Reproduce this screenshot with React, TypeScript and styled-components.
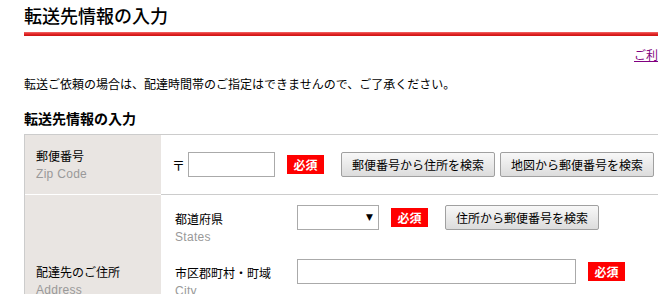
import styled, { createGlobalStyle } from 'styled-components';

const GlobalStyle = createGlobalStyle`
  html, body {
    margin: 0;
    padding: 0;
    overflow: hidden;
    background: #fff;
  }
  body {
    font-family: 'Liberation Sans', 'Noto Sans CJK JP', sans-serif;
    font-size: 12px;
    color: #000;
  }
`;

export default function App() {
  return (
    <>
      <GlobalStyle />
      <Page>
        <Title>転送先情報の入力</Title>
        <RedRule />
        <LinkRow>
          <GuideLink href='#'>ご利用ガイド</GuideLink>
        </LinkRow>
        <Notice>転送ご依頼の場合は、配達時間帯のご指定はできませんので、ご了承ください。</Notice>
        <SectionTitle>転送先情報の入力</SectionTitle>

        <FormTable>
          <Row>
            <LabelCell>
              <Jp>郵便番号</Jp>
              <En>Zip Code</En>
            </LabelCell>
            <FieldCell $padLeft={11}>
              <Controls>
                <Postal>〒</Postal>
                <TextInput $width={87} />
                <Required>必須</Required>
                <ButtonGroup>
                  <SearchButton>郵便番号から住所を検索</SearchButton>
                  <SearchButton>地図から郵便番号を検索</SearchButton>
                </ButtonGroup>
              </Controls>
            </FieldCell>
          </Row>

          <Row>
            <LabelCell>
              <Jp>配達先のご住所</Jp>
              <En>Address</En>
            </LabelCell>
            <FieldCell $padLeft={14} $stacked>
              <SubRow>
                <SubLabel>
                  <Jp>都道府県</Jp>
                  <En>States</En>
                </SubLabel>
                <Controls>
                  <SelectWrap>
                    <Select defaultValue=''>
                      <option value=''></option>
                    </Select>
                    <Arrow>▼</Arrow>
                  </SelectWrap>
                  <Required>必須</Required>
                  <SearchButton $gap={17}>住所から郵便番号を検索</SearchButton>
                </Controls>
              </SubRow>
              <SubRow>
                <SubLabel>
                  <Jp>市区郡町村・町域</Jp>
                  <En>City</En>
                </SubLabel>
                <Controls>
                  <TextInput $width={279} />
                  <Required>必須</Required>
                </Controls>
              </SubRow>
              <SubRow>
                <SubLabel>
                  <Jp>番地・建物名</Jp>
                  <En>Street</En>
                </SubLabel>
                <Controls>
                  <TextInput $width={279} />
                  <Required>必須</Required>
                </Controls>
              </SubRow>
            </FieldCell>
          </Row>
        </FormTable>
      </Page>
    </>
  );
}

const Page = styled.div`
  width: 682px;
  padding: 3px 0 0 24px;
`;

const Title = styled.h1`
  margin: 0;
  font-family: 'Noto Sans CJK JP', sans-serif;
  font-size: 18px;
  font-weight: 500;
  line-height: 24px;
  padding-bottom: 5px;
`;

const RedRule = styled.div`
  height: 4px;
  background: linear-gradient(#f26a6a, #e32424 50%, #c91414);
`;

const LinkRow = styled.div`
  margin-top: 10px;
  text-align: right;
  line-height: 18px;
`;

const GuideLink = styled.a`
  color: #800080;
  font-family: 'Noto Sans CJK JP', sans-serif;
  text-decoration: underline;
`;

const Notice = styled.p`
  margin: 10px 0 0;
  font-family: 'Noto Sans CJK JP', sans-serif;
  line-height: 18px;
`;

const SectionTitle = styled.h2`
  margin: 15px 0 0;
  font-family: 'Noto Sans CJK JP', sans-serif;
  font-size: 14px;
  font-weight: bold;
  line-height: 20px;
`;

const FormTable = styled.div`
  margin-top: 6px;
  border: 1px solid #ccc;
  border-bottom: none;
`;

const Row = styled.div`
  display: grid;
  grid-template-columns: 136px 1fr;
`;

const LabelCell = styled.div`
  background: #e9e5e2;
  border-bottom: 1px solid #fff;
  padding-left: 11px;
  display: flex;
  flex-direction: column;
  justify-content: center;
`;

const FieldCell = styled.div<{ $padLeft: number; $stacked?: boolean }>`
  border-bottom: 1px solid #ccc;
  padding-left: ${(p) => p.$padLeft}px;
  display: flex;
  flex-direction: ${(p) => (p.$stacked ? 'column' : 'row')};
  align-items: ${(p) => (p.$stacked ? 'stretch' : 'center')};
  min-height: 59px;
  padding-bottom: ${(p) => (p.$stacked ? 9 : 0)}px;
`;

const Jp = styled.div`
  font-family: 'Noto Sans CJK JP', sans-serif;
  line-height: 19px;
  white-space: nowrap;
`;

const En = styled.div`
  color: #999;
  line-height: 19px;
  letter-spacing: 0.3px;
`;

const SubRow = styled.div`
  display: flex;
  align-items: flex-start;
  height: 54px;
  padding-top: 10px;
  box-sizing: border-box;
`;

const SubLabel = styled.div`
  width: 122px;
  flex-shrink: 0;
  padding-top: 4px;
`;

const Controls = styled.div`
  display: flex;
  align-items: center;
`;

const Postal = styled.span`
  font-family: 'Noto Sans CJK JP', sans-serif;
  font-size: 13px;
  width: 16px;
`;

const TextInput = styled.input<{ $width: number }>`
  width: ${(p) => p.$width}px;
  height: 25px;
  box-sizing: border-box;
  border: 1px solid #aaa;
  margin: 0;
  padding: 2px 4px;
  font-size: 12px;
`;

const Required = styled.span`
  margin-left: 12px;
  width: 37px;
  height: 19px;
  display: inline-flex;
  align-items: center;
  justify-content: center;
  background: #ff0000;
  color: #fff;
  font-family: 'Noto Sans CJK JP', sans-serif;
  font-weight: bold;
  font-size: 12px;
`;

const ButtonGroup = styled.div`
  display: flex;
  gap: 5px;
  margin-left: 17px;
`;

const SearchButton = styled.button<{ $gap?: number }>`
  margin: 0 0 0 ${(p) => p.$gap ?? 0}px;
  height: 25px;
  padding: 0 10px;
  border: 1px solid #a0a0a0;
  border-radius: 2px;
  background: linear-gradient(#f8f8f8, #dcdcdc);
  font-family: 'Noto Sans CJK JP', sans-serif;
  font-size: 12px;
  color: #000;
  white-space: nowrap;
`;

const SelectWrap = styled.span`
  position: relative;
  display: inline-block;
  width: 82px;
  height: 25px;
`;

const Select = styled.select`
  appearance: none;
  width: 100%;
  height: 100%;
  margin: 0;
  border: 1px solid #aaa;
  background: #fff;
  border-radius: 0;
`;

const Arrow = styled.span`
  position: absolute;
  right: 6px;
  top: 6px;
  font-family: 'DejaVu Sans', sans-serif;
  font-size: 9px;
  line-height: 12px;
  pointer-events: none;
`;
